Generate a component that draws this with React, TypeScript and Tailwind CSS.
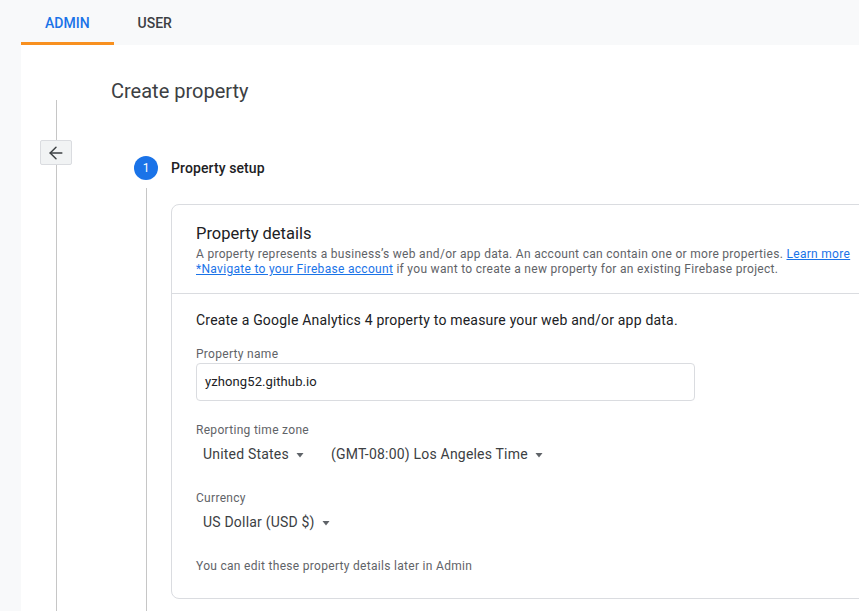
import { ArrowLeft } from "lucide-react";

function Caret() {
  return (
    <svg width="10" height="5" viewBox="0 0 10 5" className="ml-[6px] mt-[2px] fill-[#5f6368]" aria-hidden>
      <path d="M1.5 0h7L5 4.5z" />
    </svg>
  );
}

function Select({ label }: { label: string }) {
  return (
    <div className="flex items-center px-2 text-sm leading-5 tracking-[0.2px] text-[#3c4043]">
      {label}
      <Caret />
    </div>
  );
}

export default function App() {
  return (
    <div className="flex h-[611px] w-full flex-col overflow-hidden bg-[#f8f9fa] font-['Roboto',sans-serif] text-[#202124]">
      {/* tabs */}
      <div className="flex h-[45px] shrink-0 pl-[21px]">
        <div className="flex items-center border-b-[3px] border-[#f8901f] px-6 pt-[3px] text-sm font-medium text-[#1a73e8]">
          ADMIN
        </div>
        <div className="flex items-center px-6 text-sm font-medium text-[#3c4043]">USER</div>
      </div>

      <div className="ml-[21px] flex flex-1 bg-white">
        {/* back rail */}
        <div className="flex w-[70px] shrink-0 flex-col items-center pt-[55px]">
          <div className="h-[40px] w-px bg-[#c6c6c6]" />
          <button className="flex h-[25px] w-[32px] items-center justify-center rounded-[2px] border border-[#dadce0] bg-[#f1f3f4] text-[#3c4043]">
            <ArrowLeft className="h-5 w-5" strokeWidth={1.75} />
          </button>
          <div className="w-px flex-1 bg-[#c6c6c6]" />
        </div>

        <div className="flex min-w-0 flex-1 flex-col">
          <h1 className="mt-[32px] pl-[20px] text-[20px] leading-7 text-[#3c4043]">Create property</h1>

          <div className="mt-[51px] flex items-center pl-[43px]">
            <div className="flex h-6 w-6 items-center justify-center rounded-full bg-[#1a73e8] text-xs text-white">
              1
            </div>
            <span className="ml-[13px] text-sm font-medium tracking-[0.1px] text-[#202124]">Property setup</span>
          </div>

          <div className="flex flex-1 pl-[43px] pt-2">
            <div className="flex w-6 shrink-0 justify-center">
              <div className="ml-px w-px bg-[#c6c6c6]" />
            </div>
            <div className="ml-[13px] mt-4 h-[395px] w-[720px] shrink-0 rounded-lg border border-[#dadce0]">
              <div className="border-b border-[#dadce0] pb-[16px] pl-6 pt-[17px]">
                <h2 className="text-[16.5px] leading-6 text-[#202124]">Property details</h2>
                <p className="mt-[1px] text-[12px] leading-[15px] tracking-[0.3px] text-[#5f6368]">
                  A property represents a business’s web and/or app data. An account can contain one or more
                  properties. <span className="text-[#1a73e8] underline">Learn more</span>
                  <br />
                  <span className="text-[#1a73e8] underline">*Navigate to your Firebase account</span> if you want
                  to create a new property for an existing Firebase project.
                </p>
              </div>

              <div className="pl-6 pt-[16px]">
                <p className="text-sm leading-5 tracking-[0.2px] text-[#202124]">
                  Create a Google Analytics 4 property to measure your web and/or app data.
                </p>

                <div className="mt-[16px] text-[12px] leading-4 tracking-[0.3px] text-[#5f6368]">Property name</div>
                <div className="mt-[1px] flex h-[38px] w-[499px] items-center rounded border border-[#dadce0] px-2 text-[13px] tracking-[0.1px] text-[#202124]">
                  yzhong52.github.io
                </div>

                <div className="mt-[21px] text-[12px] leading-4 tracking-[0.3px] text-[#5f6368]">Reporting time zone</div>
                <div className="-ml-[1px] mt-[6px] flex items-center gap-[10px]">
                  <Select label="United States" />
                  <Select label="(GMT-08:00) Los Angeles Time" />
                </div>

                <div className="mt-[26px] text-[12px] leading-4 tracking-[0.3px] text-[#5f6368]">Currency</div>
                <div className="-ml-[1px] mt-[6px] flex">
                  <Select label="US Dollar (USD $)" />
                </div>

                <div className="mt-[26px] text-[12px] leading-4 tracking-[0.3px] text-[#5f6368]">
                  You can edit these property details later in Admin
                </div>
              </div>
            </div>
          </div>
        </div>
      </div>
    </div>
  );
}
